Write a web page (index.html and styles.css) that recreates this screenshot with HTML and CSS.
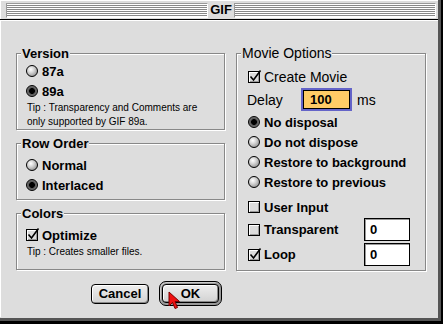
FILE: index.html
```html
<!DOCTYPE html>
<html lang="en">
<head>
    <meta charset="UTF-8">
    <title>GIF</title>
    <link rel="stylesheet" href="styles.css">
</head>
<body>
    <div class="window">
        <div class="titlebar">
            <span class="stripes"></span>
            <span class="title">GIF</span>
            <span class="stripes"></span>
        </div>

        <div class="content">
            <div class="col col-left">
                <div class="group version">
                    <span class="group-title">Version</span>
                    <div class="row"><span class="radio"></span>87a</div>
                    <div class="row"><span class="radio on"></span>89a</div>
                    <p class="tip">Tip : Transparency and Comments are<br>only supported by GIF 89a.</p>
                </div>

                <div class="group row-order">
                    <span class="group-title">Row Order</span>
                    <div class="row"><span class="radio"></span>Normal</div>
                    <div class="row"><span class="radio on"></span>Interlaced</div>
                </div>

                <div class="group colors">
                    <span class="group-title">Colors</span>
                    <div class="row">
                        <span class="check"><svg viewBox="0 0 14 14"><polyline points="2.5,6.5 5.5,10 12.5,0.5" /></svg></span>Optimize
                    </div>
                    <p class="tip">Tip : Creates smaller files.</p>
                </div>

                <div class="buttons">
                    <button class="btn cancel">Cancel</button>
                    <span class="default-ring"><button class="btn ok">OK</button></span>
                </div>
            </div>

            <div class="col col-right">
                <div class="group movie">
                    <span class="group-title light">Movie Options</span>
                    <div class="row light create">
                        <span class="check"><svg viewBox="0 0 14 14"><polyline points="2.5,6.5 5.5,10 12.5,0.5" /></svg></span>Create Movie
                    </div>
                    <div class="row light delay">
                        <span class="delay-label">Delay</span>
                        <input class="field focus" type="text" value="100">
                        <span class="unit">ms</span>
                    </div>
                    <div class="row disposal"><span class="radio on"></span>No disposal</div>
                    <div class="row"><span class="radio"></span>Do not dispose</div>
                    <div class="row"><span class="radio"></span>Restore to background</div>
                    <div class="row"><span class="radio"></span>Restore to previous</div>
                    <div class="row user-input"><span class="check"></span>User Input</div>
                    <div class="row field-row">
                        <span class="check"></span>Transparent
                        <input class="field" type="text" value="0">
                    </div>
                    <div class="row field-row loop">
                        <span class="check"><svg viewBox="0 0 14 14"><polyline points="2.5,6.5 5.5,10 12.5,0.5" /></svg></span>Loop
                        <input class="field" type="text" value="0">
                    </div>
                </div>
            </div>
        </div>

        <!-- mouse pointer over the OK button -->
        <svg class="cursor" width="13" height="19" viewBox="0 0 13 19">
            <path d="M1 1 L1 15 L4.5 11.5 L7 17.5 L9.5 16.5 L7 10.5 L11.5 10.5 Z" />
        </svg>
    </div>
</body>
</html>
```

FILE: styles.css
```css
body {
    margin: 0;
    background-color: #000;
    font-family: "Liberation Sans", Arial, sans-serif;
    font-size: 12px;
    color: #000;
}

.window {
    position: relative;
    width: 438px;
    height: 318px;
    background-color: #dddddd;
    border-right: 3px solid #555;
    border-bottom: 3px solid #555;
}

/* title bar */

.titlebar {
    display: flex;
    align-items: flex-start;
    height: 20px;
    padding: 3px 2px 0 6px;
    box-sizing: border-box;
    border-bottom: 1px solid #000;
    background-color: #dddddd;
    box-shadow: inset 1px 1px 0 #fff;
}

.stripes {
    flex: 1;
    height: 13px;
    border-top: 1px solid #999;
    border-left: 1px solid #999;
    border-bottom: 1px solid #fff;
    border-right: 1px solid #fff;
    background: repeating-linear-gradient(to bottom, #fff 0 1px, #888 1px 2px);
}

.title {
    width: 26px;
    text-align: center;
    font-weight: bold;
    font-size: 13px;
    line-height: 14px;
}

/* body */

.content {
    display: flex;
    gap: 11px;
    height: 297px;
    padding: 33px 0 0 16px;
    box-sizing: border-box;
    box-shadow: inset 1px 1px 0 #fff;
}

.col {
    display: flex;
    flex-direction: column;
}

.col-left {
    width: 209px;
}

.col-right {
    width: 190px;
}

.group {
    position: relative;
    box-sizing: border-box;
    border: 1px solid #888;
    box-shadow: 1px 1px 0 #fff, inset 1px 1px 0 #fff;
    padding-left: 9px;
}

.group-title {
    position: absolute;
    top: -8px;
    left: 4px;
    padding: 0 1px;
    background-color: #dddddd;
    font-size: 13px;
    font-weight: bold;
    line-height: 15px;
}

.group-title.light {
    font-size: 14px;
    font-weight: normal;
}

.version {
    height: 77px;
    padding-top: 7px;
}

.row-order {
    height: 57px;
    margin-top: 13px;
    padding-top: 11px;
}

.colors {
    height: 57px;
    margin-top: 13px;
    padding-top: 11px;
}

.movie {
    height: 218px;
    padding-top: 13px;
    padding-left: 11px;
    padding-right: 15px;
}

.row {
    display: flex;
    align-items: center;
    gap: 4px;
    height: 20px;
    font-size: 13px;
    font-weight: bold;
}

.row.light {
    font-size: 14px;
    font-weight: normal;
}

.tip {
    margin: 0;
    font-size: 10px;
    line-height: 14px;
    padding-left: 1px;
}

/* controls */

.radio {
    flex: none;
    width: 12px;
    height: 12px;
    box-sizing: border-box;
    border-radius: 50%;
    border: 1px solid #000;
    background: radial-gradient(circle at 38% 35%, #fff 0, #d6d6d6 35%, #7a7a7a 100%);
}

.radio.on {
    background: radial-gradient(circle at 50% 50%, #000 0 2.6px, #555 3.2px, #999 100%);
}

.check {
    position: relative;
    flex: none;
    width: 12px;
    height: 12px;
    box-sizing: border-box;
    border: 1px solid #000;
    background-color: #dcdcdc;
    box-shadow: inset 1px 1px 0 #fff, inset -1px -1px 0 #999;
}

.check svg {
    position: absolute;
    left: -1px;
    top: -2px;
    width: 14px;
    height: 14px;
    overflow: visible;
}

.check polyline {
    fill: none;
    stroke: #000;
    stroke-width: 1.6;
}

.delay {
    height: 23px;
    margin-top: 1px;
    gap: 0;
}

.delay-label {
    width: 56px;
    margin-left: -1px;
}

.unit {
    margin-left: 7px;
}

.disposal {
    margin-top: 1px;
}

.user-input {
    margin-top: 5px;
}

.field-row {
    height: 23px;
    margin-top: 1px;
}

.field-row.loop {
    margin-top: 2px;
}

.field {
    box-sizing: border-box;
    width: 46px;
    height: 23px;
    margin: 0 0 0 auto;
    padding: 0 0 0 5px;
    border: 1px solid #000;
    box-shadow: inset 1px 1px 0 #999;
    background-color: #fff;
    font-family: "Liberation Sans", Arial, sans-serif;
    font-size: 13px;
    font-weight: bold;
    color: #000;
    outline: none;
}

.field.focus {
    width: 47px;
    height: 19px;
    margin-left: 0;
    padding-left: 6px;
    background-color: #ffcc66;
    box-shadow: 0 0 0 2px #6464c8;
}

/* buttons */

.buttons {
    display: flex;
    justify-content: flex-end;
    align-items: center;
    gap: 10px;
    margin-top: 11px;
    padding-right: 3px;
}

.btn {
    box-sizing: border-box;
    padding: 0;
    border: 1px solid #000;
    border-radius: 4px;
    background: linear-gradient(#eeeeee, #d2d2d2);
    box-shadow: inset 1px 1px 0 #fff, inset -1px -1px 0 #888;
    font-family: "Liberation Sans", Arial, sans-serif;
    font-size: 13px;
    font-weight: bold;
    color: #000;
}

.cancel {
    width: 58px;
    height: 20px;
}

.default-ring {
    display: flex;
    padding: 2px;
    border: 1px solid #000;
    border-radius: 7px;
    background-color: #999;
    box-shadow: inset 1px 1px 0 #ccc;
}

.ok {
    width: 57px;
    height: 19px;
}

.cursor {
    position: absolute;
    left: 168px;
    top: 291px;
}

.cursor path {
    fill: #ee1111;
    stroke: #700;
    stroke-width: 1;
}
```
